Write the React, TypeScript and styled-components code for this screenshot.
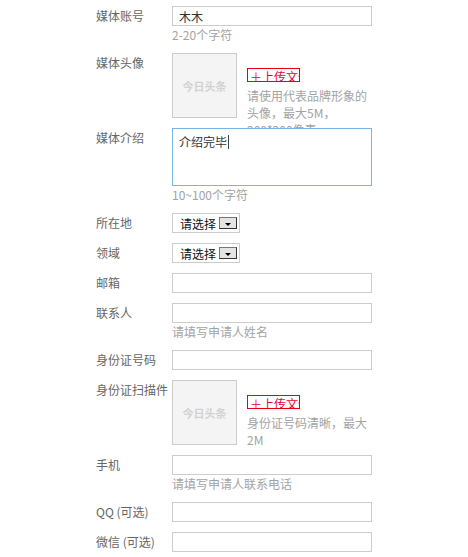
import React from 'react'
import styled, { createGlobalStyle } from 'styled-components'

const GlobalStyle = createGlobalStyle`
    html, body {
        margin: 0;
        padding: 0;
        background: #fff;
    }
    body {
        font-family: "Noto Sans CJK SC", "Liberation Sans", sans-serif;
        font-size: 12px;
    }
`

const UploadBlock = ({ tip }: { tip: string }) => (
    <UploadField>
        <Thumb>今日头条</Thumb>
        <Side>
            <UploadButton>＋上传文件</UploadButton>
            <SideTip>{tip}</SideTip>
        </Side>
    </UploadField>
)

const Select = () => (
    <SelectBox>
        <span>请选择</span>
        <Arrow />
    </SelectBox>
)

const App = () => {
    return (
        <Page>
            <GlobalStyle />
            <Row>
                <Label>媒体账号</Label>
                <Field>
                    <Input defaultValue="木木" />
                    <Hint>2-20个字符</Hint>
                </Field>
            </Row>
            <Row $fixed={65}>
                <Label>媒体头像</Label>
                <UploadBlock tip="请使用代表品牌形象的头像，最大5M，200*200像素" />
            </Row>
            <Row>
                <Label>媒体介绍</Label>
                <Field>
                    <IntroBox>
                        介绍完毕
                        <Caret />
                    </IntroBox>
                    <Hint>10~100个字符</Hint>
                </Field>
            </Row>
            <Row>
                <Label>所在地</Label>
                <Field>
                    <Select />
                </Field>
            </Row>
            <Row>
                <Label>领域</Label>
                <Field>
                    <Select />
                </Field>
            </Row>
            <Row>
                <Label>邮箱</Label>
                <Field>
                    <Input />
                </Field>
            </Row>
            <Row>
                <Label>联系人</Label>
                <Field>
                    <Input />
                    <Hint>请填写申请人姓名</Hint>
                </Field>
            </Row>
            <Row>
                <Label>身份证号码</Label>
                <Field>
                    <Input />
                </Field>
            </Row>
            <Row $fixed={65}>
                <Label>身份证扫描件</Label>
                <UploadBlock tip="身份证号码清晰，最大2M" />
            </Row>
            <Row>
                <Label>手机</Label>
                <Field>
                    <Input />
                    <Hint>请填写申请人联系电话</Hint>
                </Field>
            </Row>
            <Row>
                <Label>QQ (可选)</Label>
                <Field>
                    <Input />
                </Field>
            </Row>
            <Row>
                <Label>微信 (可选)</Label>
                <Field>
                    <Input />
                </Field>
            </Row>
        </Page>
    )
}

export default App

const Page = styled.div`
    width: 468px;
    box-sizing: border-box;
    padding: 6px 0 0 96px;
`

const Row = styled.div<{ $fixed?: number }>`
    display: flex;
    align-items: flex-start;
    margin-bottom: 10px;
    height: ${(p) => (p.$fixed ? `${p.$fixed}px` : 'auto')};
`

const Label = styled.div`
    flex: none;
    width: 76px;
    font-size: 12px;
    line-height: 20px;
    color: #666;
    white-space: nowrap;
`

const Field = styled.div`
    display: flex;
    flex-direction: column;
    align-items: flex-start;
`

const Input = styled.input`
    width: 200px;
    height: 20px;
    box-sizing: border-box;
    margin: 0;
    padding: 0 6px;
    border: 1px solid #ccc;
    outline: none;
    font-family: inherit;
    font-size: 12px;
    color: #333;
    background: #fff;
`

const Hint = styled.div`
    font-size: 12px;
    line-height: 17px;
    color: #a3a3a3;
`

const IntroBox = styled.div`
    width: 200px;
    height: 58px;
    box-sizing: border-box;
    padding: 4px 6px;
    border: 1px solid #7ab4e6;
    background: #fff;
    font-size: 12px;
    line-height: 18px;
    color: #333;
`

const Caret = styled.span`
    display: inline-block;
    width: 1px;
    height: 14px;
    margin-left: 1px;
    vertical-align: -2px;
    background: #444;
`

const SelectBox = styled.div`
    display: flex;
    align-items: center;
    justify-content: space-between;
    width: 68px;
    height: 20px;
    box-sizing: border-box;
    padding: 0 2px 0 7px;
    border: 1px solid #ccc;
    background: #fff;
    font-size: 12px;
    color: #111;
`

const Arrow = styled.span`
    position: relative;
    width: 18px;
    height: 12px;
    box-sizing: border-box;
    border: 1px solid;
    border-color: #777 #333 #333 #777;
    background: #e4e4e4;
    &::after {
        content: '';
        position: absolute;
        left: 5px;
        top: 5px;
        border-left: 3px solid transparent;
        border-right: 3px solid transparent;
        border-top: 3px solid #000;
    }
`

const UploadField = styled.div`
    display: flex;
    align-items: flex-start;
`

const Thumb = styled.div`
    flex: none;
    width: 65px;
    height: 65px;
    box-sizing: border-box;
    border: 1px solid #ccc;
    background: #f4f4f4;
    display: flex;
    align-items: center;
    justify-content: center;
    font-size: 11px;
    font-weight: bold;
    color: #d2d2d2;
`

const Side = styled.div`
    width: 125px;
    margin-left: 10px;
    padding-top: 15px;
`

const UploadButton = styled.div`
    width: 53px;
    height: 14px;
    box-sizing: border-box;
    overflow: hidden;
    white-space: nowrap;
    border: 1px solid #e60012;
    padding-left: 2px;
    font-size: 12px;
    line-height: 15px;
    color: #e60033;
`

const SideTip = styled.div`
    margin-top: 5px;
    font-size: 12px;
    line-height: 17px;
    color: #a3a3a3;
`
